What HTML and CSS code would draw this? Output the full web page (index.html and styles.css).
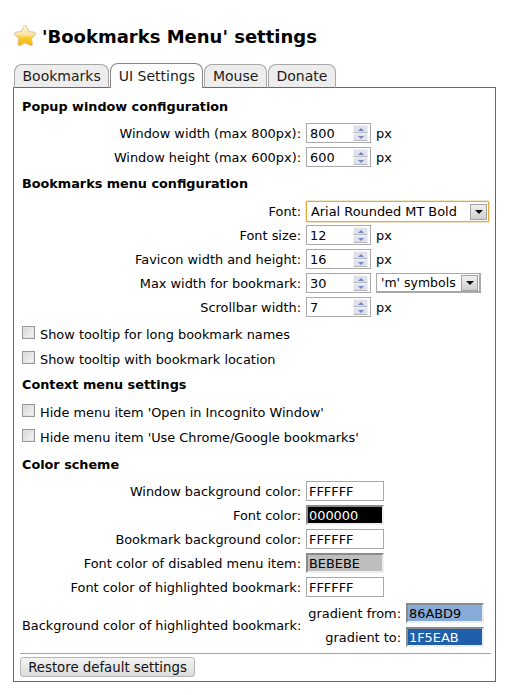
FILE: index.html
```html
<!DOCTYPE html>
<html lang="en">
<head>
    <meta charset="UTF-8">
    <title>'Bookmarks Menu' settings</title>
    <link rel="stylesheet" href="styles.css">
</head>
<body>
    <h1 class="title">
        <svg class="star" width="26" height="26" viewBox="0 0 26 26">
            <defs>
                <linearGradient id="starFill" x1="0" y1="0" x2="0" y2="1">
                    <stop offset="0" stop-color="#fdf6e6"/>
                    <stop offset="0.45" stop-color="#f8e4a0"/>
                    <stop offset="0.62" stop-color="#f7cc2c"/>
                    <stop offset="1" stop-color="#f4b40c"/>
                </linearGradient>
            </defs>
            <path d="M13 2.5c.9 0 1.4.7 1.8 1.6l2 4.400 4.900.6c2 .3 2.600 1.700 1.300 3l-3.600 3.400 1 4.800c.4 2-1 2.900-2.600 2l-4.800-2.500-4.300 2.500c-1.800.9-3.100 0-2.800-2l.9-4.800-3.600-3.400c-1.400-1.300-.8-2.800 1.200-3l4.900-.6 2.100-4.400c.4-.9.900-1.600 1.600-1.600z" fill="url(#starFill)" stroke="#dcc09a" stroke-width="1"/>
        </svg>
        'Bookmarks Menu' settings
    </h1>

    <div class="tabs">
        <div class="tab">Bookmarks</div>
        <div class="tab active">UI Settings</div>
        <div class="tab">Mouse</div>
        <div class="tab">Donate</div>
    </div>

    <div class="panel">
        <h2>Popup window configuration</h2>
        <div class="row">
            <label>Window width (max 800px):</label>
            <div class="controls">
                <span class="spin"><input type="text" value="800"><span class="arrows"><i class="up"></i><i class="down"></i></span></span> px
            </div>
        </div>
        <div class="row">
            <label>Window height (max 600px):</label>
            <div class="controls">
                <span class="spin"><input type="text" value="600"><span class="arrows"><i class="up"></i><i class="down"></i></span></span> px
            </div>
        </div>

        <h2 class="menu-head">Bookmarks menu configuration</h2>
        <div class="row font-row">
            <label>Font:</label>
            <div class="controls">
                <span class="drop focused"><span class="drop-text">Arial Rounded MT Bold</span><span class="drop-btn"></span></span>
            </div>
        </div>
        <div class="row">
            <label>Font size:</label>
            <div class="controls">
                <span class="spin"><input type="text" value="12"><span class="arrows"><i class="up"></i><i class="down"></i></span></span> px
            </div>
        </div>
        <div class="row">
            <label>Favicon width and height:</label>
            <div class="controls">
                <span class="spin"><input type="text" value="16"><span class="arrows"><i class="up"></i><i class="down"></i></span></span> px
            </div>
        </div>
        <div class="row">
            <label>Max width for bookmark:</label>
            <div class="controls">
                <span class="spin"><input type="text" value="30"><span class="arrows"><i class="up"></i><i class="down"></i></span></span>
                <span class="drop small"><span class="drop-text">'m' symbols</span><span class="drop-btn"></span></span>
            </div>
        </div>
        <div class="row">
            <label>Scrollbar width:</label>
            <div class="controls">
                <span class="spin"><input type="text" value="7"><span class="arrows"><i class="up"></i><i class="down"></i></span></span> px
            </div>
        </div>

        <label class="check first"><input type="checkbox"> Show tooltip for long bookmark names</label>
        <label class="check"><input type="checkbox"> Show tooltip with bookmark location</label>

        <h2 class="context-head">Context menu settings</h2>
        <label class="check first-ctx"><input type="checkbox"> Hide menu item 'Open in Incognito Window'</label>
        <label class="check"><input type="checkbox"> Hide menu item 'Use Chrome/Google bookmarks'</label>

        <h2 class="color-head">Color scheme</h2>
        <div class="row color-first">
            <label>Window background color:</label>
            <div class="controls"><input class="color" type="text" value="FFFFFF"></div>
        </div>
        <div class="row">
            <label>Font color:</label>
            <div class="controls"><input class="color inset black" type="text" value="000000"></div>
        </div>
        <div class="row">
            <label>Bookmark background color:</label>
            <div class="controls"><input class="color" type="text" value="FFFFFF"></div>
        </div>
        <div class="row">
            <label>Font color of disabled menu item:</label>
            <div class="controls"><input class="color inset grey" type="text" value="BEBEBE"></div>
        </div>
        <div class="row">
            <label>Font color of highlighted bookmark:</label>
            <div class="controls"><input class="color" type="text" value="FFFFFF"></div>
        </div>
        <div class="row gradient-row">
            <label>Background color of highlighted bookmark:</label>
            <div class="gradient">
                <span class="grad-label">gradient from:</span>
                <input class="color inset light-blue" type="text" value="86ABD9">
                <span class="grad-label">gradient to:</span>
                <input class="color inset blue" type="text" value="1F5EAB">
            </div>
        </div>

        <div class="footer">
            <button type="button">Restore default settings</button>
        </div>
    </div>
</body>
</html>
```

FILE: styles.css
```css
* { box-sizing: border-box; }
body { margin: 0; padding: 0 14px 0 13px; background-color: #ffffff; color: #000; font-family: "DejaVu Sans", Verdana, sans-serif; font-size: 12.9px; }
input, button { font-family: inherit; font-size: inherit; }

.title { display: flex; align-items: center; gap: 4px; height: 26px; margin: 23px 0 14px 0; font-size: 18px; font-weight: bold; }
.star { flex: none; margin-left: -1px; }

.tabs { display: flex; gap: 1px; padding-left: 1px; height: 25px; margin-bottom: -1px; position: relative; }
.tab { padding: 0 7.5px; height: 24px; margin-top: 1px; line-height: 23px; font-size: 14px; color: #1c1c1c; background-color: #eeeded; border: 1px solid #a8a8a8; border-bottom-color: #6f6565; border-radius: 8px 8px 0 0; }
.tab.active { height: 25px; margin-top: 0; line-height: 24px; background-color: #fff; border-color: #8c8484; border-bottom: none; }

.panel { height: 595px; padding: 10px 5px 0 8px; border: 1px solid #6f6565; }
h2 { margin: 0; height: 18px; line-height: 18px; font-size: 12.8px; font-weight: bold; }
.menu-head { margin-top: 8px; }
.context-head { margin-top: 9px; }
.color-head { margin-top: 11px; }

.row { display: grid; grid-template-columns: 279px auto; column-gap: 5px; align-items: center; height: 20px; margin-top: 4px; }
.row:first-of-type { margin-top: 7px; }
.row label { text-align: right; white-space: nowrap; }
.controls { display: flex; align-items: center; gap: 5px; white-space: nowrap; }
.font-row { margin-top: 8px; }
.color-first { margin-top: 7px; }

.spin { display: inline-flex; width: 65px; height: 20px; border: 1px solid #a9a9a9; background-color: #fff; }
.spin input { width: 46px; height: 18px; padding: 0 0 0 3px; border: none; outline: none; background: transparent; }
.arrows { display: flex; flex-direction: column; width: 15px; height: 16px; margin: 1px 0 0 0; }
.arrows i { flex: 1; display: flex; align-items: center; justify-content: center; background-color: #dfe2ea; border: 1px solid #f2f3f6; border-bottom-color: #b4b6bd; }
.arrows i::after { content: ""; border-left: 3px solid transparent; border-right: 3px solid transparent; }
.arrows .up::after { border-bottom: 3px solid #7884bb; }
.arrows .down::after { border-top: 3px solid #7884bb; }

.drop { display: inline-flex; align-items: center; height: 20px; border: 1px solid #a9a9a9; background-color: #fff; }
.drop-text { flex: 1; padding-left: 4px; white-space: nowrap; }
.drop-btn { display: flex; align-items: center; justify-content: center; width: 17px; height: 16px; margin-right: 1px; background: linear-gradient(#f0f0f0, #cfcfcf); border: 1px solid #a3a3a3; }
.drop-btn::after { content: ""; border-left: 4px solid transparent; border-right: 4px solid transparent; border-top: 4px solid #111; }
.drop.focused { width: 183px; height: 21px; border: 1px solid #e2a93f; box-shadow: 0 0 0 0.5px #eecb8b; border-radius: 1px; }
.drop.small { width: 105px; font-size: 12.5px; border-right: 2px solid #a9a9a9; border-bottom: 2px solid #a9a9a9; }

.check { display: flex; align-items: center; gap: 5px; height: 16px; margin-top: 9px; white-space: nowrap; }
.check input { appearance: none; flex: none; width: 13px; height: 13px; margin: 0 0 3px 0; border: 1px solid #969696; background: linear-gradient(135deg, #d6d6d6, #f7f7f7); box-shadow: inset 0 0 0 1px #e4e4e4; }
.check.first { margin-top: 9px; }
.check.first-ctx { margin-top: 10px; }

.color { display: block; width: 78px; height: 20px; padding: 0 0 0 2px; border: 1px solid #a9a9a9; outline: none; color: #000; background-color: #fff; }
.color.inset { border: 2px solid #eeeeee; border-top-color: #8b8b8b; border-left-color: #8b8b8b; padding-left: 1px; }
.color.black { background-color: #000; color: #fff; }
.color.grey { background-color: #bebebe; }
.color.light-blue { background-color: #86abd9; }
.color.blue { background-color: #1f5eab; color: #fff; }

.gradient-row { height: 44px; margin-top: 6px; }
.gradient { display: grid; grid-template-columns: 95px auto; column-gap: 5px; row-gap: 4px; align-items: center; }
.grad-label { text-align: right; white-space: nowrap; }

.footer { margin: 6px 0 0 -2px; padding-top: 3px; width: 471px; border-top: 1px solid #a5a5a5; }
.footer button { display: block; width: 175px; height: 20px; padding: 0; font-size: 13.3px; color: #111; background: linear-gradient(#f3f3f3, #dcdcdc); border: 1px solid #b5b5b5; border-radius: 3px; }
```
